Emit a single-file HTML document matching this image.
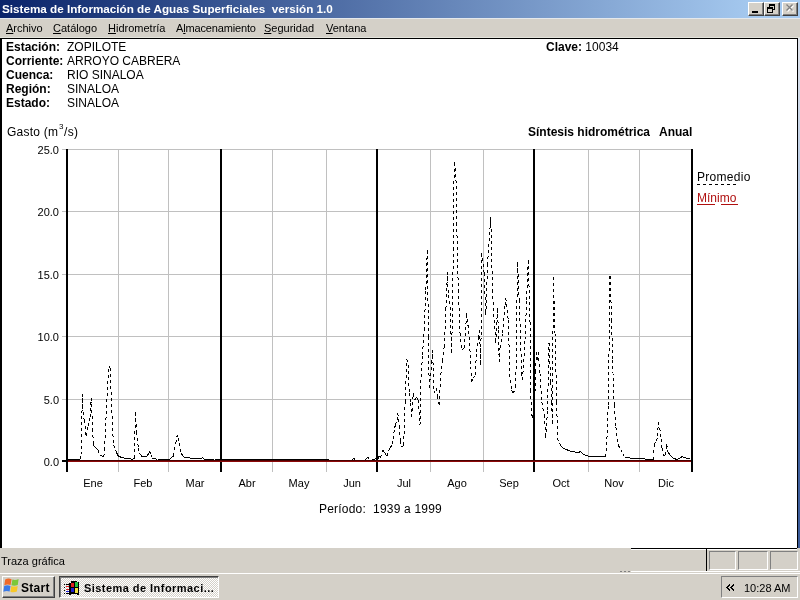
<!DOCTYPE html>
<html><head><meta charset="utf-8">
<style>
*{margin:0;padding:0;box-sizing:border-box}
html,body{width:800px;height:600px;overflow:hidden;background:#D4D0C8;font-family:"Liberation Sans",sans-serif;}
.a{will-change:transform}
.a{position:absolute;white-space:pre;line-height:1}
#title{position:absolute;left:0;top:0;width:800px;height:18px;background:linear-gradient(to right,#0A246A,#A6CAF0 760px);}
#title .t{left:2px;top:3px;font-size:11.7px;font-weight:bold;color:#fff}
.btn{position:absolute;top:2px;width:16px;height:14px;background:#D4D0C8;border-top:1px solid #fff;border-left:1px solid #fff;border-right:1px solid #404040;border-bottom:1px solid #404040;box-shadow:inset -1px -1px 0 #808080}
#menu{position:absolute;left:0;top:18px;width:800px;height:20px;background:#D4D0C8;box-shadow:inset 0 1px 0 #E4E8EC,inset 0 -1px 0 #E4E4DC}
#menu .a{top:5px;font-size:11px;color:#000}
#content{position:absolute;left:0;top:38px;width:798px;height:510px;background:#fff;border-top:1px solid #000;border-left:2px solid #000;border-right:1px solid #000}
#status{position:absolute;left:0;top:548px;width:800px;height:24px;background:#D4D0C8}
#task{position:absolute;left:0;top:572px;width:800px;height:28px;background:#D4D0C8;box-shadow:inset 0 1px 0 #D4D0C8,inset 0 2px 0 #fff}
.b{font-weight:bold}
.t12{font-size:12px}
.t11{font-size:11px}
.pnl{position:absolute;top:3px;height:19px;border-top:1px solid #808080;border-left:1px solid #808080;border-right:1px solid #fff;border-bottom:1px solid #fff}
.raised{position:absolute;background:#D4D0C8;border-top:1px solid #fff;border-left:1px solid #fff;border-right:1px solid #404040;border-bottom:1px solid #404040;box-shadow:inset -1px -1px 0 #808080}
.sunk{position:absolute;border-top:1px solid #404040;border-left:1px solid #404040;border-right:1px solid #fff;border-bottom:1px solid #fff;box-shadow:inset 1px 1px 0 #808080;background:repeating-conic-gradient(#fff 0 25%,#D4D0C8 0 50%) 0 0/2px 2px}
.tray{position:absolute;border-top:1px solid #808080;border-left:1px solid #808080;border-right:1px solid #fff;border-bottom:1px solid #fff}
u{text-decoration:underline;text-underline-offset:1px;text-decoration-thickness:1px}
</style></head><body>
<div id="title"><span class="a t">Sistema de Información de Aguas Superficiales  versión 1.0</span>
<div class="btn" style="left:748px"><div style="position:absolute;left:3px;top:8px;width:6px;height:2px;background:#000"></div></div>
<div class="btn" style="left:764px"><svg width="16" height="14" style="position:absolute;left:-1px;top:-1px" shape-rendering="crispEdges"><path d="M5 2h6v2H5zM5 2h1v3H5zM10 2h1v6h-1zM9 7h2v1H9z" fill="#000"/><path d="M3 5h6v2H3zM3 5h1v6H3zM8 5h1v6H8zM3 10h6v1H3z" fill="#000"/></svg></div>
<div class="btn" style="left:782px"><svg width="16" height="14" style="position:absolute;left:-1px;top:-1px"><path d="M5.5 3.5L11.5 9.5M11.5 3.5L5.5 9.5" stroke="#fff" stroke-width="1.4"/><path d="M4.5 2.5L10.5 8.5M10.5 2.5L4.5 8.5" stroke="#808080" stroke-width="1.4"/></svg></div>
</div>
<div id="menu">
<span class="a" style="left:6px"><u>A</u>rchivo</span>
<span class="a" style="left:53px"><u>C</u>atálogo</span>
<span class="a" style="left:108px"><u>H</u>idrometría</span>
<span class="a" style="left:176px;letter-spacing:-0.15px">A<u>l</u>macenamiento</span>
<span class="a" style="left:264px"><u>S</u>eguridad</span>
<span class="a" style="left:326px"><u>V</u>entana</span>
</div>
<div id="content"></div>
<div class="a t12 b" style="left:6px;top:41px">Estación:</div>
<div class="a t12 b" style="left:6px;top:55px">Corriente:</div>
<div class="a t12 b" style="left:6px;top:69px">Cuenca:</div>
<div class="a t12 b" style="left:6px;top:83px">Región:</div>
<div class="a t12 b" style="left:6px;top:97px">Estado:</div>
<div class="a t12" style="left:67px;top:41px">ZOPILOTE</div>
<div class="a t12" style="left:67px;top:55px">ARROYO CABRERA</div>
<div class="a t12" style="left:67px;top:69px">RIO SINALOA</div>
<div class="a t12" style="left:67px;top:83px">SINALOA</div>
<div class="a t12" style="left:67px;top:97px">SINALOA</div>
<div class="a t12" style="left:546px;top:41px"><b>Clave:</b> 10034</div>
<div class="a t12" style="left:7px;top:126px;letter-spacing:0.25px">Gasto (m</div>
<div class="a" style="left:59px;top:123px;font-size:8px">3</div>
<div class="a t12" style="left:64px;top:126px;letter-spacing:0.3px">/s)</div>
<div class="a t12 b" style="left:528px;top:126px">Síntesis hidrométrica</div>
<div class="a t12 b" style="left:659px;top:126px">Anual</div>
<svg width="800" height="600" style="position:absolute;left:0;top:0" shape-rendering="crispEdges"><rect x="62" y="149" width="630" height="1" fill="#C0C0C0"/><rect x="62" y="211" width="630" height="1" fill="#C0C0C0"/><rect x="62" y="274" width="630" height="1" fill="#C0C0C0"/><rect x="62" y="336" width="630" height="1" fill="#C0C0C0"/><rect x="62" y="399" width="630" height="1" fill="#C0C0C0"/><rect x="62" y="461" width="630" height="1" fill="#C0C0C0"/><rect x="118" y="149" width="1" height="323" fill="#C0C0C0"/><rect x="168" y="149" width="1" height="323" fill="#C0C0C0"/><rect x="272" y="149" width="1" height="323" fill="#C0C0C0"/><rect x="326" y="149" width="1" height="323" fill="#C0C0C0"/><rect x="430" y="149" width="1" height="323" fill="#C0C0C0"/><rect x="483" y="149" width="1" height="323" fill="#C0C0C0"/><rect x="588" y="149" width="1" height="323" fill="#C0C0C0"/><rect x="639" y="149" width="1" height="323" fill="#C0C0C0"/><rect x="66" y="149" width="2" height="323" fill="#000"/><rect x="220" y="149" width="2" height="323" fill="#000"/><rect x="376" y="149" width="2" height="323" fill="#000"/><rect x="533" y="149" width="2" height="323" fill="#000"/><rect x="691" y="149" width="2" height="323" fill="#000"/><rect x="62" y="460" width="5" height="2" fill="#000"/></svg>
<svg width="800" height="600" style="position:absolute;left:0;top:0"><path d="M67.0 459.0L68.6 459.0M68.6 459.0L70.2 459.0M70.2 459.0L71.9 459.0M71.9 459.0L73.5 459.0M73.5 459.0L75.1 459.0M75.1 459.0L76.8 459.0M76.8 459.0L78.4 459.0M78.4 459.0L80.0 459.0M80.0 459.0L81.0 455.0M81.0 455.0L82.4 394.3M82.4 394.3L83.3 418.0M83.3 418.0L84.5 420.0M84.5 420.0L86.0 435.7M86.0 435.7L88.0 426.4M88.0 426.4L90.0 417.0M90.0 417.0L91.3 398.3M91.3 398.3L92.7 429.0M92.7 429.0L93.3 443.7M93.3 443.7L94.0 446.3M94.0 446.3L96.0 448.3M96.0 448.3L98.0 450.3M98.0 450.3L100.0 455.0M100.0 455.0L101.8 455.9M101.8 455.9L103.7 456.8M103.7 456.8L104.6 450.4M104.6 450.4L105.9 420.1M105.9 420.1L107.3 389.9M107.3 389.9L109.2 366.0M109.2 366.0L110.0 367.8M110.0 367.8L111.9 410.0M111.9 410.0L112.8 434.0M112.8 434.0L113.8 445.0M113.8 445.0L115.6 450.4M115.6 450.4L116.9 453.2M116.9 453.2L118.3 456.0M118.3 456.0L120.2 456.9M120.2 456.9L122.0 457.8M122.0 457.8L123.8 458.0M123.8 458.0L125.7 458.3M125.7 458.3L127.5 458.5M127.5 458.5L129.3 458.7M129.3 458.7L131.2 459.0M131.2 459.0L133.0 459.2M133.0 459.2L134.5 458.0M134.5 458.0L135.3 411.9M135.3 411.9L136.7 432.5M136.7 432.5L138.3 447.7M138.3 447.7L139.4 453.0M139.4 453.0L140.8 454.9M140.8 454.9L142.1 456.9M142.1 456.9L143.7 456.7M143.7 456.7L145.4 456.5M145.4 456.5L147.0 456.3M147.0 456.3L148.3 453.9M148.3 453.9L149.7 451.5M149.7 451.5L151.1 454.8M151.1 454.8L152.4 458.0M152.4 458.0L154.1 458.5M154.1 458.5L155.7 459.0M155.7 459.0L157.5 459.1M157.5 459.1L159.2 459.1M159.2 459.1L161.0 459.1M161.0 459.1L162.8 459.2M162.8 459.2L164.5 459.2M164.5 459.2L166.3 459.3M166.3 459.3L168.0 459.3M168.0 459.3L169.8 459.4M169.8 459.4L171.9 456.9M171.9 456.9L173.5 456.3M173.5 456.3L175.7 443.3M175.7 443.3L177.3 434.7M177.3 434.7L178.4 437.9M178.4 437.9L179.5 443.3M179.5 443.3L181.1 453.0M181.1 453.0L183.3 456.9M183.3 456.9L185.1 457.2M185.1 457.2L186.9 457.4M186.9 457.4L188.7 457.7M188.7 457.7L190.4 458.0M190.4 458.0L192.2 458.2M192.2 458.2L194.0 458.5M194.0 458.5L195.8 458.6M195.8 458.6L197.5 458.6M197.5 458.6L199.2 458.7M199.2 458.7L201.0 458.8M201.0 458.8L202.5 457.5M202.5 457.5L204.0 459.0M204.0 459.0L205.7 459.0M205.7 459.0L207.4 459.0M207.4 459.0L209.2 459.0M209.2 459.0L210.9 459.0M210.9 459.0L212.6 459.0M212.6 459.0L214.3 459.0M214.3 459.0L216.0 459.1M216.0 459.1L217.8 459.1M217.8 459.1L219.5 459.1M219.5 459.1L221.2 459.1M221.2 459.1L222.9 459.1M222.9 459.1L224.6 459.1M224.6 459.1L226.4 459.1M226.4 459.1L228.1 459.1M228.1 459.1L229.8 459.1M229.8 459.1L231.5 459.1M231.5 459.1L233.2 459.1M233.2 459.1L235.0 459.1M235.0 459.1L236.7 459.2M236.7 459.2L238.4 459.2M238.4 459.2L240.1 459.2M240.1 459.2L241.8 459.2M241.8 459.2L243.6 459.2M243.6 459.2L245.3 459.2M245.3 459.2L247.0 459.2M247.0 459.2L248.7 459.2M248.7 459.2L250.4 459.2M250.4 459.2L252.2 459.2M252.2 459.2L253.9 459.2M253.9 459.2L255.6 459.2M255.6 459.2L257.3 459.2M257.3 459.2L259.0 459.3M259.0 459.3L260.8 459.3M260.8 459.3L262.5 459.3M262.5 459.3L264.2 459.3M264.2 459.3L265.9 459.3M265.9 459.3L267.6 459.3M267.6 459.3L269.4 459.3M269.4 459.3L271.1 459.3M271.1 459.3L272.8 459.3M272.8 459.3L274.5 459.3M274.5 459.3L276.2 459.3M276.2 459.3L278.0 459.3M278.0 459.3L279.7 459.4M279.7 459.4L281.4 459.4M281.4 459.4L283.1 459.4M283.1 459.4L284.8 459.4M284.8 459.4L286.6 459.4M286.6 459.4L288.3 459.4M288.3 459.4L290.0 459.4M290.0 459.4L291.7 459.4M291.7 459.4L293.5 459.4M293.5 459.4L295.2 459.4M295.2 459.4L296.9 459.4M296.9 459.4L298.6 459.4M298.6 459.4L300.4 459.4M300.4 459.4L302.1 459.4M302.1 459.4L303.8 459.4M303.8 459.4L305.5 459.4M305.5 459.4L307.3 459.4M307.3 459.4L309.0 459.4M309.0 459.4L310.7 459.4M310.7 459.4L312.5 459.4M312.5 459.4L314.2 459.4M314.2 459.4L315.9 459.4M315.9 459.4L317.6 459.4M317.6 459.4L319.4 459.4M319.4 459.4L321.1 459.4M321.1 459.4L322.8 459.4M322.8 459.4L324.5 459.4M324.5 459.4L326.3 459.4M326.3 459.4L328.0 459.4M328.0 459.4L330.0 460.5M330.0 460.5L331.7 460.5M331.7 460.5L333.4 460.5M333.4 460.5L335.1 460.5M335.1 460.5L336.8 460.5M336.8 460.5L338.5 460.5M338.5 460.5L340.2 460.5M340.2 460.5L341.8 460.5M341.8 460.5L343.5 460.5M343.5 460.5L345.2 460.5M345.2 460.5L346.9 460.5M346.9 460.5L348.6 460.5M348.6 460.5L350.3 460.5M350.3 460.5L352.0 460.5M352.0 460.5L353.8 458.0M353.8 458.0L355.6 460.5M355.6 460.5L357.5 460.5M357.5 460.5L359.4 460.5M359.4 460.5L361.2 460.5M361.2 460.5L363.1 460.5M363.1 460.5L365.0 460.5M365.0 460.5L367.5 456.9M367.5 456.9L370.0 460.5M370.0 460.5L371.7 460.0M371.7 460.0L373.3 459.5M373.3 459.5L375.0 459.0M375.0 459.0L376.6 458.8M376.6 458.8L378.2 458.5M378.2 458.5L379.3 455.8M379.3 455.8L380.5 458.0M380.5 458.0L382.5 449.8M382.5 449.8L383.9 451.7M383.9 451.7L385.2 453.6M385.2 453.6L386.8 456.3M386.8 456.3L388.5 451.0M388.5 451.0L390.4 447.7M390.4 447.7L392.3 444.4M392.3 444.4L393.3 439.0M393.3 439.0L394.4 428.2M394.4 428.2L395.5 425.0M395.5 425.0L397.1 419.5M397.1 419.5L397.7 413.0M397.7 413.0L398.8 419.5M398.8 419.5L399.3 426.0M399.3 426.0L400.4 441.2M400.4 441.2L401.5 447.1M401.5 447.1L403.6 445.5M403.6 445.5L405.1 402.4M405.1 402.4L406.7 359.2M406.7 359.2L408.5 365.0M408.5 365.0L409.2 393.3M409.2 393.3L410.8 403.0M410.8 403.0L411.7 416.7M411.7 416.7L413.3 393.3M413.3 393.3L415.0 400.0M415.0 400.0L416.5 397.0M416.5 397.0L418.3 400.0M418.3 400.0L420.0 425.0M420.0 425.0L420.8 383.3M420.8 383.3L422.5 355.0M422.5 355.0L424.2 330.0M424.2 330.0L425.8 290.0M425.8 290.0L427.3 250.0M427.3 250.0L428.5 336.7M428.5 336.7L429.2 388.3M429.2 388.3L431.7 363.3M431.7 363.3L432.5 350.0M432.5 350.0L434.2 393.3M434.2 393.3L436.0 388.0M436.0 388.0L437.6 396.5M437.6 396.5L439.2 405.0M439.2 405.0L440.8 375.0M440.8 375.0L442.5 360.9M442.5 360.9L444.2 346.7M444.2 346.7L445.9 309.2M445.9 309.2L447.5 271.7M447.5 271.7L448.3 295.0M448.3 295.0L450.0 306.7M450.0 306.7L451.7 353.3M451.7 353.3L453.3 250.0M453.3 250.0L454.2 161.7M454.2 161.7L455.8 168.3M455.8 168.3L456.7 223.0M456.7 223.0L458.3 290.0M458.3 290.0L460.0 333.3M460.0 333.3L461.7 350.0M461.7 350.0L464.2 348.3M464.2 348.3L466.7 313.3M466.7 313.3L469.2 336.7M469.2 336.7L471.7 381.7M471.7 381.7L473.4 378.4M473.4 378.4L475.0 375.0M475.0 375.0L476.7 351.7M476.7 351.7L478.3 338.0M478.3 338.0L479.5 330.0M479.5 330.0L480.8 365.0M480.8 365.0L481.7 252.5M481.7 252.5L484.2 273.3M484.2 273.3L485.8 315.0M485.8 315.0L487.5 265.0M487.5 265.0L489.1 240.8M489.1 240.8L490.8 216.7M490.8 216.7L492.5 290.0M492.5 290.0L494.2 320.0M494.2 320.0L495.8 343.3M495.8 343.3L497.5 308.3M497.5 308.3L498.3 330.0M498.3 330.0L499.2 361.7M499.2 361.7L500.0 348.3M500.0 348.3L502.5 333.3M502.5 333.3L505.0 305.0M505.0 305.0L505.8 298.3M505.8 298.3L508.3 320.0M508.3 320.0L510.0 380.0M510.0 380.0L511.7 390.0M511.7 390.0L513.3 393.3M513.3 393.3L515.8 386.7M515.8 386.7L517.5 261.7M517.5 261.7L519.2 300.0M519.2 300.0L521.7 373.3M521.7 373.3L522.5 380.0M522.5 380.0L525.0 340.0M525.0 340.0L526.6 300.0M526.6 300.0L528.3 260.0M528.3 260.0L530.0 321.7M530.0 321.7L530.5 390.0M530.5 390.0L531.7 415.0M531.7 415.0L532.5 418.3M532.5 418.3L534.8 398.0M534.8 398.0L535.6 372.0M535.6 372.0L536.3 352.0M536.3 352.0L537.2 360.0M537.2 360.0L538.3 351.7M538.3 351.7L540.0 373.3M540.0 373.3L541.7 401.7M541.7 401.7L544.2 415.0M544.2 415.0L545.8 438.3M545.8 438.3L547.5 410.0M547.5 410.0L549.0 343.0M549.0 343.0L550.8 381.7M550.8 381.7L551.7 401.7M551.7 401.7L552.5 424.0M552.5 424.0L553.3 276.7M553.3 276.7L555.0 333.3M555.0 333.3L556.7 401.7M556.7 401.7L557.5 438.3M557.5 438.3L559.2 443.3M559.2 443.3L561.2 445.8M561.2 445.8L563.3 448.3M563.3 448.3L565.0 449.0M565.0 449.0L566.7 449.7M566.7 449.7L568.3 450.3M568.3 450.3L570.0 451.0M570.0 451.0L571.7 451.7M571.7 451.7L573.6 451.9M573.6 451.9L575.5 452.1M575.5 452.1L577.3 452.3M577.3 452.3L579.2 452.5M579.2 452.5L580.0 450.8M580.0 450.8L581.7 453.3M581.7 453.3L583.4 454.1M583.4 454.1L585.0 455.0M585.0 455.0L586.7 455.8M586.7 455.8L588.4 456.2M588.4 456.2L590.0 456.7M590.0 456.7L591.8 456.7M591.8 456.7L593.5 456.7M593.5 456.7L595.3 456.7M595.3 456.7L597.0 456.7M597.0 456.7L598.8 456.7M598.8 456.7L600.5 456.7M600.5 456.7L602.3 456.7M602.3 456.7L604.0 456.7M604.0 456.7L605.8 456.7M605.8 456.7L606.7 445.0M606.7 445.0L608.3 405.0M608.3 405.0L610.0 275.8M610.0 275.8L611.7 320.0M611.7 320.0L612.5 360.0M612.5 360.0L614.2 405.0M614.2 405.0L615.8 426.7M615.8 426.7L618.3 445.0M618.3 445.0L620.8 450.0M620.8 450.0L622.9 453.8M622.9 453.8L625.0 457.5M625.0 457.5L626.7 457.7M626.7 457.7L628.3 457.8M628.3 457.8L630.0 458.0M630.0 458.0L631.6 458.1M631.6 458.1L633.3 458.3M633.3 458.3L635.0 458.4M635.0 458.4L636.6 458.5M636.6 458.5L638.3 458.6M638.3 458.6L640.0 458.7M640.0 458.7L641.7 458.8M641.7 458.8L643.3 458.9M643.3 458.9L645.0 459.0M645.0 459.0L646.7 459.1M646.7 459.1L648.3 459.2M648.3 459.2L650.0 459.3M650.0 459.3L651.6 459.4M651.6 459.4L653.3 459.5M653.3 459.5L653.8 453.0M653.8 453.0L654.3 444.0M654.3 444.0L656.6 441.2M656.6 441.2L657.5 435.7M657.5 435.7L658.4 421.9M658.4 421.9L659.8 428.3M659.8 428.3L661.1 439.4M661.1 439.4L662.1 448.5M662.1 448.5L663.4 456.3M663.4 456.3L665.3 455.0M665.3 455.0L666.7 444.0M666.7 444.0L668.0 452.2M668.0 452.2L669.9 454.7M669.9 454.7L671.7 457.2M671.7 457.2L673.2 458.0M673.2 458.0L674.8 458.7M674.8 458.7L676.3 459.5M676.3 459.5L678.1 458.9M678.1 458.9L680.0 458.2M680.0 458.2L682.2 456.3M682.2 456.3L683.6 457.7M683.6 457.7L685.2 457.9M685.2 457.9L686.8 458.1M686.8 458.1L688.4 458.4M688.4 458.4L690.0 458.6" fill="none" stroke="#000" stroke-width="1" stroke-dasharray="3 3" shape-rendering="crispEdges"/><rect x="68" y="460" width="623" height="1" fill="#4A0000"/><rect x="68" y="461" width="623" height="1" fill="#8C0808"/></svg>
<div class="a t11" style="left:20px;width:39px;text-align:right;top:144.5px">25.0</div><div class="a t11" style="left:20px;width:39px;text-align:right;top:206.5px">20.0</div><div class="a t11" style="left:20px;width:39px;text-align:right;top:269.5px">15.0</div><div class="a t11" style="left:20px;width:39px;text-align:right;top:331.5px">10.0</div><div class="a t11" style="left:20px;width:39px;text-align:right;top:394.5px">5.0</div><div class="a t11" style="left:20px;width:39px;text-align:right;top:456.5px">0.0</div><div class="a t11" style="left:62.5px;width:60px;text-align:center;top:478px">Ene</div><div class="a t11" style="left:113.0px;width:60px;text-align:center;top:478px">Feb</div><div class="a t11" style="left:164.5px;width:60px;text-align:center;top:478px">Mar</div><div class="a t11" style="left:216.5px;width:60px;text-align:center;top:478px">Abr</div><div class="a t11" style="left:269.0px;width:60px;text-align:center;top:478px">May</div><div class="a t11" style="left:321.5px;width:60px;text-align:center;top:478px">Jun</div><div class="a t11" style="left:373.5px;width:60px;text-align:center;top:478px">Jul</div><div class="a t11" style="left:426.5px;width:60px;text-align:center;top:478px">Ago</div><div class="a t11" style="left:478.5px;width:60px;text-align:center;top:478px">Sep</div><div class="a t11" style="left:531.0px;width:60px;text-align:center;top:478px">Oct</div><div class="a t11" style="left:583.5px;width:60px;text-align:center;top:478px">Nov</div><div class="a t11" style="left:635.5px;width:60px;text-align:center;top:478px">Dic</div>
<div class="a t12" style="left:319px;top:503px;letter-spacing:0.2px">Período:  1939 a 1999</div>
<div class="a t12" style="left:697px;top:171px;letter-spacing:0.3px">Promedio</div>
<div class="a t12" style="left:697px;top:192px;color:#B01010">Mínimo</div>
<svg width="800" height="600" style="position:absolute;left:0;top:0" shape-rendering="crispEdges"><rect x="697" y="184" width="40" height="1" fill="none"/>
<line x1="697" y1="184.5" x2="736" y2="184.5" stroke="#000" stroke-dasharray="3 3"/>
<line x1="697" y1="204.5" x2="738" y2="204.5" stroke="#B01010" stroke-dasharray="18 6"/></svg>
<div id="status"><span class="a t11" style="left:1px;top:8px">Traza gráfica</span>
<div style="position:absolute;left:631px;top:0;width:166px;height:1px;background:#000"></div>
<div style="position:absolute;left:631px;top:1px;width:166px;height:1px;background:#fff"></div>
<div style="position:absolute;left:706px;top:0;width:1px;height:23px;background:#000"></div>
<div style="position:absolute;left:631px;top:23px;width:169px;height:1px;background:#fff"></div>
<div style="position:absolute;left:620px;top:23px;width:2px;height:1px;background:#808080"></div>
<div style="position:absolute;left:624px;top:23px;width:2px;height:1px;background:#808080"></div>
<div style="position:absolute;left:628px;top:23px;width:2px;height:1px;background:#808080"></div>
<div class="pnl" style="left:709px;width:27px"></div>
<div class="pnl" style="left:738px;width:30px"></div>
<div class="pnl" style="left:770px;width:28px"></div>
</div>
<div style="position:absolute;left:798px;top:38px;width:2px;height:510px;background:linear-gradient(#E0E4EC,#A8C0E0 40%,#4A6CA8 60%,#3A5A98)"></div>
<div id="task">
<div class="raised" style="left:2px;top:4px;width:53px;height:22px"></div>
<svg width="16" height="16" style="position:absolute;left:3px;top:5px" viewBox="0 0 16 16">
<path d="M2.2 2.6 Q5 0.8 8.6 2.2 L7.6 8 Q4.4 6.8 1.3 8.2Z" fill="#F06A2A"/>
<path d="M9.4 2.5 Q12.4 3.6 15.6 2 L14.8 8 Q11.6 9.4 8.4 8.3Z" fill="#7CC83A"/>
<path d="M1.2 9 Q4.2 7.6 7.5 8.9 L6.6 14.6 Q3.6 13.4 0.4 14.8Z" fill="#3A7AE8"/>
<path d="M8.3 9.1 Q11.6 10.2 14.7 8.9 L13.9 14.6 Q10.6 16 7.4 14.8Z" fill="#F8C828"/>
</svg>
<span class="a b" style="left:21px;top:10px;font-size:12px;letter-spacing:0.3px">Start</span>
<div class="sunk" style="left:59px;top:4px;width:160px;height:22px"></div>
<svg width="18" height="16" style="position:absolute;left:63px;top:8px" viewBox="0 0 18 16" shape-rendering="crispEdges">
<path d="M1 4h1v1H1zM1 7h1v1H1zM1 10h1v1H1zM1 13h1v1H1z" fill="#000"/>
<path d="M3 6h3v1H3zM3 9h3v1H3z" fill="#E02020"/><path d="M3 11h3v1H3z" fill="#2020E0"/>
<path d="M3 4h3v1H3zM3 13h3v1H3z" fill="#000"/>
<path d="M6 3h2V1h5l1 1h2v13h-2l-1-1H8v1H6z" fill="#000"/>
<path d="M8 3h3v4H8z" fill="#E02020"/><path d="M12 2h3v5h-3z" fill="#20C040"/>
<path d="M8 8h3v4H8z" fill="#2020D0"/><path d="M12 8h3v5h-3z" fill="#F0E040"/>
</svg>
<span class="a b t11" style="left:84px;top:11px;letter-spacing:0.45px">Sistema de Informaci...</span>
<div class="tray" style="left:721px;top:4px;width:77px;height:22px"></div>
<svg width="12" height="10" style="position:absolute;left:725px;top:11px" shape-rendering="crispEdges"><path d="M4 1h1v1H4zM3 2h2v1H3zM2 3h2v1H2zM1 4h2v1H1zM2 5h2v1H2zM3 6h2v1H3zM4 7h1v1H4z M8 1h1v1H8zM7 2h2v1H7zM6 3h2v1H6zM5 4h2v1H5zM6 5h2v1H6zM7 6h2v1H7zM8 7h1v1H8z" fill="#000"/></svg>
<span class="a t11" style="left:744px;top:11px">10:28 AM</span>
</div>
</body></html>
